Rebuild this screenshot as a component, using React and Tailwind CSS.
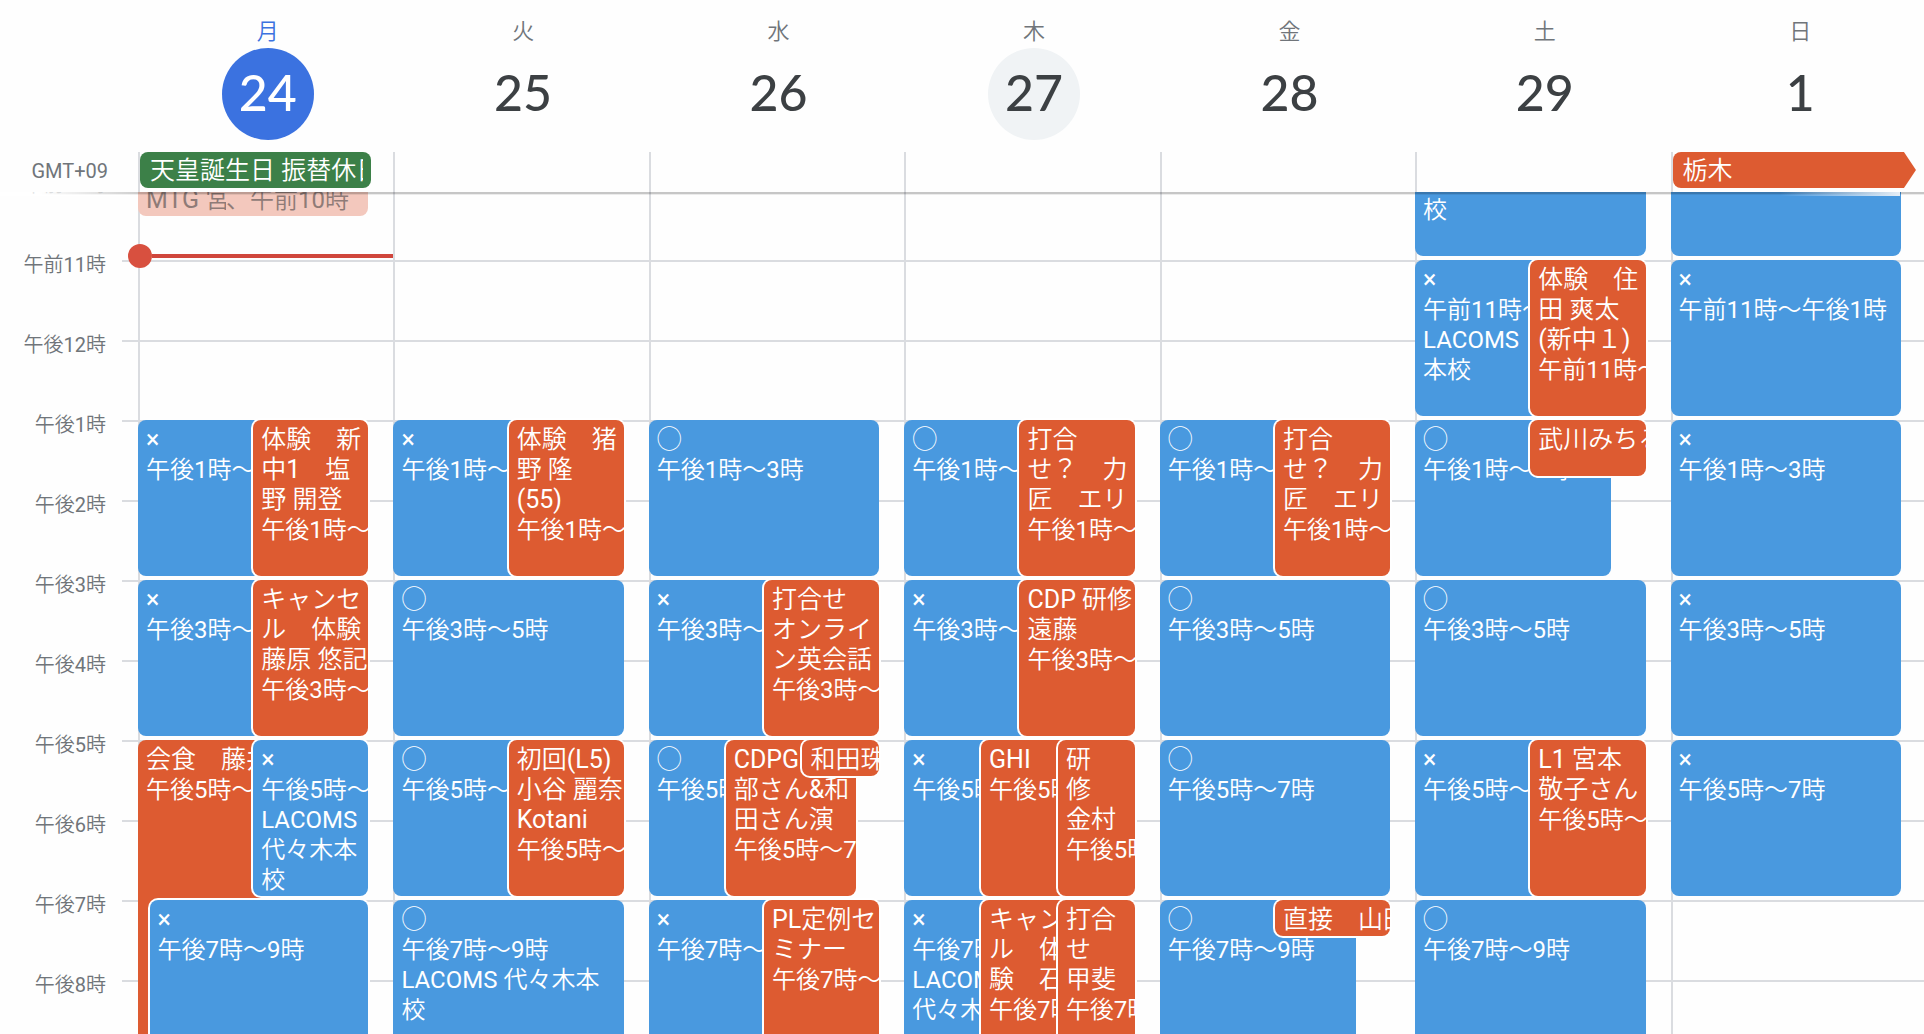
const HOURS = [
  '午前9時', '午前10時', '午前11時', '午後12時', '午後1時', '午後2時',
  '午後3時', '午後4時', '午後5時', '午後6時', '午後7時', '午後8時', '午後9時',
];

// Events: start / end in hours, from / to in sixtieths of the column's event width.
const blue = (start, end, from, to, lines) => ({ tone: 'blue', start, end, from, to, lines });
const red = (start, end, from, to, lines) => ({ tone: 'red', start, end, from, to, lines });
const t = (text) => ({ title: text });
const d = (text) => ({ text });

const DAYS = [
  {
    name: '月', date: 24, today: true, allDay: { label: '天皇誕生日 振替休日', tone: 'green' },
    events: [
      { tone: 'past', start: 10, end: 10.5, from: 0, to: 60, lines: [] },
      blue(13, 15, 0, 51, [t('×'), d('午後1時～3時')]),
      red(13, 15, 30, 60, [t('体験　新'), t('中1　塩'), t('野 開登'), d('午後1時～3時')]),
      blue(15, 17, 0, 51, [t('×'), d('午後3時～5時')]),
      red(15, 17, 30, 60, [t('キャンセ'), t('ル　体験'), t('藤原 悠記'), d('午後3時～5時')]),
      red(17, 22, 0, 51, [t('会食　藤井'), d('午後5時～10時')]),
      blue(17, 19, 30, 60, [t('×'), d('午後5時～7時'), d('LACOMS'), d('代々木本'), d('校')]),
      blue(19, 21, 3, 60, [t('×'), d('午後7時～9時')]),
    ],
  },
  {
    name: '火', date: 25,
    events: [
      blue(13, 15, 0, 51, [t('×'), d('午後1時～3時')]),
      red(13, 15, 30, 60, [t('体験　猪'), t('野 隆'), t('(55)'), d('午後1時～3時')]),
      blue(15, 17, 0, 60, [t('◯'), d('午後3時～5時')]),
      blue(17, 19, 0, 51, [t('◯'), d('午後5時～7時')]),
      red(17, 19, 30, 60, [t('初回(L5)'), t('小谷 麗奈'), t('Kotani'), d('午後5時～7時')]),
      blue(19, 21, 0, 60, [t('◯'), d('午後7時～9時'), d('LACOMS 代々木本'), d('校')]),
    ],
  },
  {
    name: '水', date: 26,
    events: [
      blue(13, 15, 0, 60, [t('◯'), d('午後1時～3時')]),
      blue(15, 17, 0, 51, [t('×'), d('午後3時～5時')]),
      red(15, 17, 30, 60, [t('打合せ'), t('オンライ'), t('ン英会話'), d('午後3時～5時')]),
      blue(17, 19, 0, 34, [t('◯'), d('午後5時～7時')]),
      red(17, 19, 20, 54, [t('CDPG 阿'), t('部さん&和'), t('田さん演'), d('午後5時～7時')]),
      red(17, 17.5, 40, 60, [t('和田珠実')]),
      blue(19, 21, 0, 51, [t('×'), d('午後7時～9時')]),
      red(19, 21, 30, 60, [t('PL定例セ'), t('ミナー'), d('午後7時～9時')]),
    ],
  },
  {
    name: '木', date: 27, hovered: true,
    events: [
      blue(13, 15, 0, 51, [t('◯'), d('午後1時～3時')]),
      red(13, 15, 30, 60, [t('打合'), t('せ？　力'), t('匠　エリ'), d('午後1時～3時')]),
      blue(15, 17, 0, 51, [t('×'), d('午後3時～5時')]),
      red(15, 17, 30, 60, [t('CDP 研修'), t('遠藤'), d('午後3時～5時')]),
      blue(17, 19, 0, 34, [t('×'), d('午後5時～7時')]),
      red(17, 19, 20, 54, [t('GHI'), d('午後5時～7時')]),
      red(17, 19, 40, 60, [t('研'), t('修'), t('金村'), d('午後5時～7時')]),
      blue(19, 21, 0, 34, [t('×'), d('午後7時～9時'), d('LACOMS'), d('代々木本校')]),
      red(19, 21, 20, 54, [t('キャンセ'), t('ル　体'), t('験　石'), d('午後7時～9時')]),
      red(19, 21, 40, 60, [t('打合'), t('せ'), t('甲斐'), d('午後7時～9時')]),
    ],
  },
  {
    name: '金', date: 28,
    events: [
      blue(13, 15, 0, 51, [t('◯'), d('午後1時～3時')]),
      red(13, 15, 30, 60, [t('打合'), t('せ？　力'), t('匠　エリ'), d('午後1時～3時')]),
      blue(15, 17, 0, 60, [t('◯'), d('午後3時～5時')]),
      blue(17, 19, 0, 60, [t('◯'), d('午後5時～7時')]),
      blue(19, 21, 0, 51, [t('◯'), d('午後7時～9時')]),
      red(19, 19.5, 30, 60, [t('直接　山田')]),
    ],
  },
  {
    name: '土', date: 29,
    events: [
      blue(9, 11, 0, 60, [t('◯'), d('午前9時～11時'), d('LACOMS 代々木本'), d('校')]),
      blue(11, 13, 0, 51, [t('×'), d('午前11時～午後1時'), d('LACOMS'), d('本校')]),
      red(11, 13, 30, 60, [t('体験　住'), t('田 爽太'), t('(新中１)'), d('午前11時～午後1時')]),
      blue(13, 15, 0, 51, [t('◯'), d('午後1時～3時')]),
      red(13, 13.75, 30, 60, [t('武川みちる')]),
      blue(15, 17, 0, 60, [t('◯'), d('午後3時～5時')]),
      blue(17, 19, 0, 51, [t('×'), d('午後5時～7時')]),
      red(17, 19, 30, 60, [t('L1 宮本'), t('敬子さん'), d('午後5時～7時')]),
      blue(19, 21, 0, 60, [t('◯'), d('午後7時～9時')]),
    ],
  },
  {
    name: '日', date: 1, allDay: { label: '栃木', tone: 'arrow' },
    events: [
      blue(9, 11, 0, 60, [t('×'), d('午前9時～11時')]),
      blue(11, 13, 0, 60, [t('×'), d('午前11時～午後1時')]),
      blue(13, 15, 0, 60, [t('×'), d('午後1時～3時')]),
      blue(15, 17, 0, 60, [t('×'), d('午後3時～5時')]),
      blue(17, 19, 0, 60, [t('×'), d('午後5時～7時')]),
    ],
  },
];

const TONES = {
  blue: 'bg-[#4999df] text-white',
  red: 'bg-[#dd5b31] text-white',
  past: 'bg-[#f3c8bd] text-[#8f7b77]',
};

function Event({ event }) {
  const { tone, start, end, from, to, lines } = event;
  const ring = from > 0 ? 'ring-2 ring-white' : '';
  return (
    <button
      type="button"
      className={`mb-1 flex min-w-0 flex-col items-start overflow-hidden rounded-lg pt-[5px] pl-2 text-left whitespace-nowrap ${TONES[tone]} ${ring}`}
      style={{
        gridRow: `${(start - 9) * 4 + 1} / ${(end - 9) * 4 + 1}`,
        gridColumn: `${from + 1} / ${to + 1}`,
      }}
    >
      {tone === 'past' && (
        <span className="flex leading-[30px]">
          <span className="w-20 overflow-hidden text-[25px]">MTG 宮</span>
          <span className="text-2xl leading-[30px]">、午前10時</span>
        </span>
      )}
      {lines.map((line, i) =>
        line.title ? (
          <span key={i} className="text-[25px] leading-[30px]">{line.title}</span>
        ) : (
          <span key={i} className="text-2xl leading-[30px]">{line.text}</span>
        )
      )}
    </button>
  );
}

function DayHeading({ day }) {
  const circle = day.today
    ? 'bg-[#3b72e0] text-white'
    : day.hovered
      ? 'bg-[#f0f3f5] text-[#3c4043]'
      : 'text-[#3c4043]';
  return (
    <div className="flex min-w-0 flex-1 flex-col items-center pt-4">
      <h2 className={`text-[22px] leading-8 font-medium ${day.today ? 'text-[#3b72e0]' : 'text-[#70757a]'}`}>
        {day.name}
      </h2>
      <button type="button" className={`size-[92px] rounded-full pb-1 font-['Lato',sans-serif] text-[50px] leading-[86px] font-medium ${circle}`}>
        {day.date}
      </button>
    </div>
  );
}

function AllDayEvent({ allDay }) {
  if (allDay.tone === 'green') {
    return (
      <button type="button" className="mr-[22px] h-9 min-w-0 flex-1 rounded-lg bg-[#3c8048] pr-2 pl-2.5 text-left text-[25px] leading-[38px] whitespace-nowrap text-white">
        <span className="block h-9 overflow-hidden">{allDay.label}</span>
      </button>
    );
  }
  return (
    <button type="button" className="mr-2.5 h-9 flex-1 rounded-l-lg bg-[#dd5b31] pl-2.5 text-left text-[25px] leading-[38px] whitespace-nowrap text-white [clip-path:polygon(0_0,calc(100%-12px)_0,100%_50%,calc(100%-12px)_100%,0_100%)]">
      {allDay.label}
    </button>
  );
}

export default function App() {
  return (
    <main className="flex h-screen flex-col overflow-hidden bg-[#fefefe] font-['Roboto','Noto_Sans_CJK_JP_DemiLight','Noto_Sans_CJK_JP',sans-serif]">
      <header className="relative z-10 shrink-0 bg-[#fefefe]">
        <div className="-mr-1 flex h-[152px] pl-[140px]">
          {DAYS.map((day) => <DayHeading key={day.name} day={day} />)}
        </div>
        <div className="-mr-0.5 flex h-10">
          <div className="w-[138px] shrink-0 pr-[30px] text-right text-xl leading-[38px] text-[#70757a]">GMT+09</div>
          {DAYS.map((day) => (
            <div key={day.name} className="flex min-w-0 flex-1 border-l-2 border-[#dadce0]">
              {day.allDay && <AllDayEvent allDay={day.allDay} />}
            </div>
          ))}
        </div>
        <div className="absolute top-full left-0 h-1 w-[130px] bg-white/80" />
        <div className="absolute inset-x-0 top-full h-[3px] bg-linear-to-r from-transparent from-2% via-[#00000038] via-8% to-[#00000038] mask-b-from-50%" />
        <div className="absolute top-full right-6 h-1 w-[120px] bg-linear-to-r from-transparent to-[#e6eef6]" />
      </header>

      <section className="min-h-0 flex-1 overflow-hidden" aria-label="週">
        <div className="-mt-[92px] -mr-0.5 flex">
          <div className="w-[138px] shrink-0">
            {HOURS.map((hour) => (
              <div key={hour} className="flex h-20 items-start">
                <div className="flex-1 pr-4 text-right text-xl leading-[10px] text-[#70757a]">{hour}</div>
                <div className="w-4 border-t-2 border-[#dadce0]" />
              </div>
            ))}
          </div>
          {DAYS.map((day) => (
            <div
              key={day.name}
              className="relative grid min-w-0 flex-1 grid-cols-[repeat(60,minmax(0,1fr))] grid-rows-[repeat(52,20px)] bg-[linear-gradient(to_right,#dadce0_2px,transparent_2px),repeating-linear-gradient(to_bottom,#dadce0_0,#dadce0_2px,transparent_2px,transparent_80px)] pr-[25px]"
            >
              {day.events.map((event, i) => <Event key={i} event={event} />)}
              {day.today && (
                <div className="absolute top-[144px] -left-2.5 flex h-6 w-[calc(100%+10px)] items-center">
                  <span className="size-6 rounded-full bg-[#d8503f]" />
                  <span className="h-1 flex-1 bg-[#d0463c]" />
                </div>
              )}
            </div>
          ))}
        </div>
      </section>
    </main>
  );
}
